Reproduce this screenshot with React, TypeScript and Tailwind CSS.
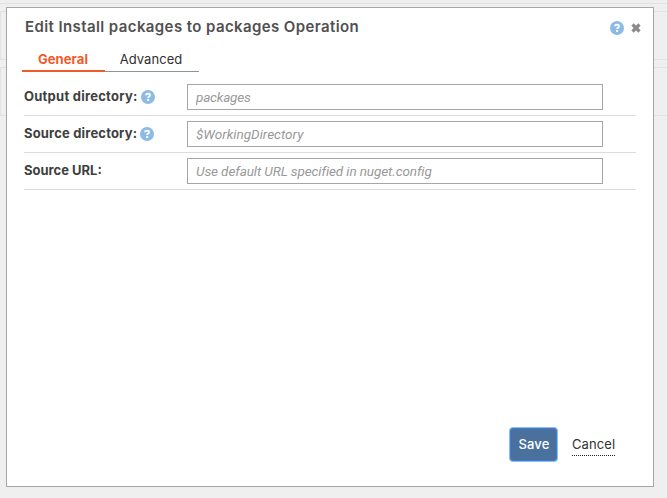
import React from "react";

function HelpIcon() {
  return (
    <svg width="14" height="14" viewBox="0 0 14 14" className="block shrink-0" role="img" aria-label="Help">
      <circle cx="7" cy="7" r="7" fill="#8dbbe7" />
      <path d="M5 5.3V4.9Q5.2 3.7 7 3.7Q9 3.7 9 5.2Q9 6.1 8.1 6.6Q7.1 7.1 7.1 8.1" fill="none" stroke="#fff" strokeWidth="1.8" />
      <rect x="6.1" y="9" width="2" height="1.9" fill="#fff" />
    </svg>
  );
}

function CloseIcon() {
  return (
    <svg width="10" height="10" viewBox="0 0 10 10" className="block" role="img" aria-label="Close">
      <path d="M1.5 1.5L8.5 8.5M8.5 1.5L1.5 8.5" stroke="#8b8b8b" strokeWidth="3.2" />
    </svg>
  );
}

type FieldProps = { label: string; placeholder: string; help?: boolean; labelClass: string; inputClass: string };

function Field({ label, placeholder, help, labelClass, inputClass }: FieldProps) {
  return (
    <div className="flex h-[37px] items-start border-b border-[#dcdcdc] pt-[5px]">
      <label className="flex h-[26px] w-[163px] shrink-0 items-center gap-[3px] text-[13px] font-bold text-[#3f3f3f]">
        <span className={`whitespace-nowrap ${labelClass}`}>{label}</span>
        {help && <HelpIcon />}
      </label>
      <input
        className={`h-[26px] w-[416px] border border-[#a6a6a6] bg-white pr-2 pl-2 font-['Roboto','Liberation_Sans',sans-serif] text-[13.5px] text-[#444] italic outline-none placeholder:text-[#999] ${inputClass}`}
        placeholder={placeholder}
      />
    </div>
  );
}

export default function App() {
  return (
    <div className="relative h-[498px] w-[667px] overflow-hidden bg-[#efefef] font-['Inter','Liberation_Sans',sans-serif]">
      <div className="flex flex-col">
        <div className="h-1 border-b border-[#e2e2e2]" />
        <div className="mt-[7px] h-[49px] border-y border-l border-[#e2e2e2]" />
        <div className="mt-[7px] h-[49px] border-y border-l border-[#e2e2e2]" />
      </div>
      <section className="absolute top-[7px] left-[6px] flex h-[480px] w-[648px] flex-col border border-[#a6a6a6] bg-white pr-[17px] pl-[15px]">
        <header className="flex h-[39px] items-center pl-[3px]">
          <h1 className="text-[15px] font-semibold whitespace-nowrap text-[#505050] tracking-[0.4px]">Edit Install packages to packages Operation</h1>
          <div className="-mr-[5px] ml-auto flex items-center gap-[7px]">
            <HelpIcon />
            <CloseIcon />
          </div>
        </header>
        <nav className="flex h-[25px] items-stretch text-[13px]">
          <button className="w-[83px] border-b-2 border-[#f15a29] pt-[3px] pr-px font-bold text-[#f15a29] tracking-[0.1px]">General</button>
          <button className="w-[94px] border-b border-[#8a969c] pt-[2px] pr-[2px] text-[#2f2f2f] tracking-[0.05px]">Advanced</button>
        </nav>
        <div className="mt-[7px] ml-[2px] flex flex-col">
          <Field label="Output directory:" placeholder="packages" help labelClass="tracking-[0.25px]" inputClass="tracking-[-0.2px]" />
          <Field label="Source directory:" placeholder="$WorkingDirectory" help labelClass="tracking-[0.17px]" inputClass="tracking-[0px]" />
          <Field label="Source URL:" placeholder="Use default URL specified in nuget.config" labelClass="tracking-[0px]" inputClass="tracking-[-0.1px]" />
        </div>
        <footer className="mt-auto mr-[21px] mb-[24px] flex items-start justify-end gap-[14px]">
          <button className="flex h-[35px] w-[49px] items-center justify-center rounded-[4px] border border-[#8bbcf5] bg-[#4a719d] pt-px pl-px text-[13px] font-medium text-white shadow-[inset_0_0_0_1px_#3f7bd0] tracking-[0.1px]">Save</button>
          <a className="mt-[7px] flex h-[22px] w-[43px] items-center border-b border-dotted border-[#222] text-[13px] text-[#333] tracking-[0.1px]">Cancel</a>
        </footer>
      </section>
    </div>
  );
}
